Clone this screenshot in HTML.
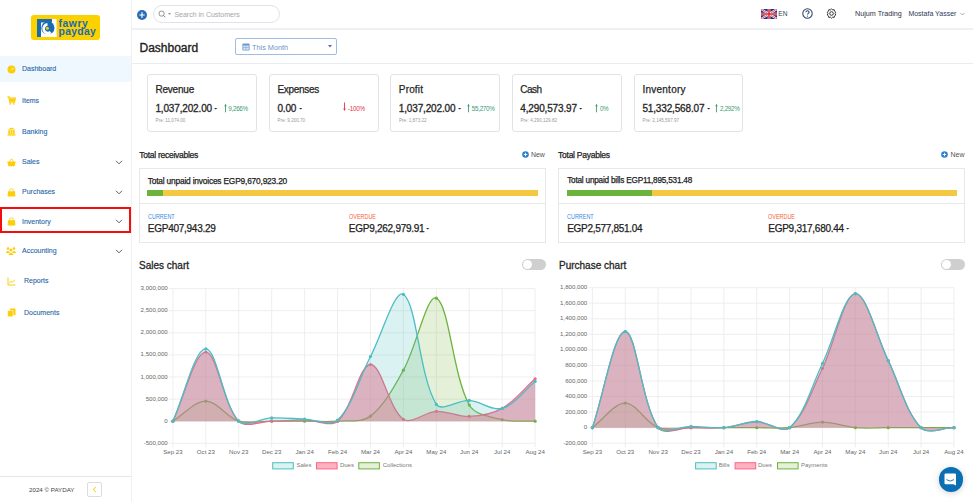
<!DOCTYPE html>
<html><head><meta charset="utf-8">
<style>
*{box-sizing:border-box;margin:0;padding:0}
html,body{width:973px;height:502px;overflow:hidden;background:#fff;font-family:"Liberation Sans",sans-serif;color:#2a2a2a}
.a{position:absolute;white-space:nowrap;line-height:1}
#sb{position:absolute;left:0;top:0;width:132px;height:502px;border-right:1px solid #f0f0f0;background:#fff}
.mi{position:absolute;left:22px;font-size:7px;color:#1f66a6;line-height:1;-webkit-text-stroke:0.1px #1f66a6}
.ic{position:absolute;left:7px;width:9px;height:9px}
.chev{position:absolute;left:115px;width:8px;height:5px}
.card{position:absolute;top:73.5px;width:110px;height:58.5px;border:1px solid #e3e3e3;border-radius:3px;background:#fff}
.ct{position:absolute;left:7.8px;top:10.5px;font-size:10px;letter-spacing:-0.2px;color:#262626;line-height:1;-webkit-text-stroke:0.25px #262626}
.cv{position:absolute;left:7.8px;top:29.5px;font-size:10px;letter-spacing:-0.15px;color:#262626;line-height:1;-webkit-text-stroke:0.3px #262626}
.cp{position:absolute;left:8px;top:44px;font-size:4.6px;color:#9a9a9a;line-height:1}
.pct{position:absolute;top:31.8px;font-size:6.3px;letter-spacing:-0.3px;line-height:1}
.box{position:absolute;top:167.5px;width:407px;height:75.5px;border:1px solid #e8e8e8;background:#fff}
.tl{font-size:8.5px;letter-spacing:-0.26px;color:#222;-webkit-text-stroke:0.25px #222}
svg text{font-family:"Liberation Sans",sans-serif}
.yl{font-size:6.1px;fill:#666;text-anchor:end}
.xl{font-size:6.1px;fill:#666;text-anchor:middle}
</style></head><body>

<!-- SIDEBAR -->
<div id="sb">
  <div class="a" style="left:31px;top:15px;width:69px;height:25px;background:#fcd100;border-radius:3px"></div>
  <svg class="a" style="left:36.5px;top:18.5px" width="20" height="18" viewBox="0 0 20 18">
    <rect x="0" y="0" width="19.5" height="18" fill="#fff"/>
    <circle cx="10.9" cy="8.9" r="6.6" fill="#1b6bb3"/>
    <path d="M0 0H15V3.6H4V18H0Z" fill="#1b6bb3"/>
    <path d="M10.5 5.4A4.3 4.3 0 1 0 13.6 13" fill="none" stroke="#fff" stroke-width="2.7"/>
    <circle cx="10.4" cy="9.3" r="1.5" fill="#f4cd12"/>
    <rect x="5.5" y="14.8" width="14" height="3.2" fill="#fff"/>
  </svg>
  <div class="a" style="left:58.5px;top:19.2px;font-size:10.4px;font-weight:bold;color:#1b6bb3;letter-spacing:0.55px;line-height:9.8px">fawry</div>
  <div class="a" style="left:58.5px;top:26.9px;font-size:10.4px;font-weight:bold;color:#1b6bb3;letter-spacing:0.3px;line-height:9.8px">payday</div>

  <div class="a" style="left:0;top:56px;width:131px;height:26px;background:#eff8fe"></div>

  <!-- icons -->
  <svg class="ic" style="top:64.5px" viewBox="0 0 9 9"><circle cx="4.5" cy="4.5" r="4" fill="#fdcd08"/><path d="M4.5 5L6.3 2.8" stroke="#fff" stroke-width="0.9"/></svg>
  <div class="mi" style="top:65px">Dashboard</div>

  <svg class="ic" style="top:96px" viewBox="0 0 9 9"><path d="M0.5 1H2L2.8 6H7.5L8.3 2.2H2.3" fill="none" stroke="#fdcd08" stroke-width="1.3"/><path d="M2.5 3H8V5H2.8Z" fill="#fdcd08"/><circle cx="3.3" cy="7.8" r="0.9" fill="#fdcd08"/><circle cx="6.8" cy="7.8" r="0.9" fill="#fdcd08"/></svg>
  <div class="mi" style="top:96.5px">Items</div>

  <svg class="ic" style="top:127px" viewBox="0 0 9 9"><path d="M4.5 0.5L8.5 2.6H0.5Z" fill="#fdcd08"/><rect x="1.3" y="3.2" width="6.4" height="3.8" fill="#fdcd08"/><rect x="0.5" y="7.3" width="8" height="1.3" fill="#fdcd08"/><rect x="3" y="3.8" width="0.6" height="3" fill="#fff"/><rect x="5.4" y="3.8" width="0.6" height="3" fill="#fff"/></svg>
  <div class="mi" style="top:127.5px">Banking</div>

  <svg class="ic" style="top:157.5px" viewBox="0 0 9 9"><path d="M0.3 3.5H8.7L7.6 8.3H1.4Z" fill="#fdcd08"/><path d="M2.5 3.5L4.5 0.8L6.5 3.5" fill="none" stroke="#fdcd08" stroke-width="0.9"/></svg>
  <div class="mi" style="top:158px">Sales</div>
  <svg class="chev" style="top:159.5px" viewBox="0 0 8 5"><path d="M1 0.8L4 3.8L7 0.8" fill="none" stroke="#555" stroke-width="0.95"/></svg>

  <svg class="ic" style="top:187.5px" viewBox="0 0 9 9"><path d="M1 3.3H8L8.4 8.6H0.6Z" fill="#fdcd08"/><path d="M2.8 3.5V2.3C2.8 0.3 6.2 0.3 6.2 2.3V3.5" fill="none" stroke="#fdcd08" stroke-width="0.9"/></svg>
  <div class="mi" style="top:188px">Purchases</div>
  <svg class="chev" style="top:189.5px" viewBox="0 0 8 5"><path d="M1 0.8L4 3.8L7 0.8" fill="none" stroke="#555" stroke-width="0.95"/></svg>

  <svg class="ic" style="top:217px" viewBox="0 0 9 9"><path d="M1 3.3H8L8.4 8.6H0.6Z" fill="#fdcd08"/><path d="M2.8 3.5V2.3C2.8 0.3 6.2 0.3 6.2 2.3V3.5" fill="none" stroke="#fdcd08" stroke-width="0.9"/></svg>
  <div class="mi" style="top:217.5px">Inventory</div>
  <svg class="chev" style="top:219px" viewBox="0 0 8 5"><path d="M1 0.8L4 3.8L7 0.8" fill="none" stroke="#555" stroke-width="0.95"/></svg>

  <svg class="ic" style="top:246px;left:6px;width:10px" viewBox="0 0 10 9"><circle cx="2" cy="2.5" r="1.3" fill="#fdcd08"/><circle cx="8" cy="2.5" r="1.3" fill="#fdcd08"/><circle cx="5" cy="4" r="1.5" fill="#fdcd08"/><path d="M0 6.5Q2 3.8 3.5 6.2V7H0Z" fill="#fdcd08"/><path d="M10 6.5Q8 3.8 6.5 6.2V7H10Z" fill="#fdcd08"/><path d="M2.3 9Q5 4.5 7.7 9Z" fill="#fdcd08"/></svg>
  <div class="mi" style="top:246.5px">Accounting</div>
  <svg class="chev" style="top:248.5px" viewBox="0 0 8 5"><path d="M1 0.8L4 3.8L7 0.8" fill="none" stroke="#555" stroke-width="0.95"/></svg>

  <svg class="ic" style="top:276.5px" viewBox="0 0 9 9"><path d="M1 0.5V8H8.5" fill="none" stroke="#fdcd08" stroke-width="1"/><path d="M2.3 6.2L4 4.2L5.3 5.3L7.8 2.8" fill="none" stroke="#fdcd08" stroke-width="1"/></svg>
  <div class="mi" style="top:277px;left:24px">Reports</div>

  <svg class="ic" style="top:308px" viewBox="0 0 9 9"><rect x="3" y="0.5" width="5.5" height="6.5" rx="0.6" fill="#fdcd08"/><rect x="0.6" y="2.5" width="5.5" height="6.3" rx="0.6" fill="#fdcd08" stroke="#fff" stroke-width="0.6"/></svg>
  <div class="mi" style="top:308.5px;left:24px">Documents</div>

  <div class="a" style="left:0;top:207px;width:131px;height:26px;border:2px solid #f40d0d"></div>

  <div class="a" style="left:0;top:476px;width:131px;height:1px;background:#e4e6ea"></div>
  <div class="a" style="left:29px;top:487px;font-size:6.2px;color:#444">2024 © PAYDAY</div>
  <div class="a" style="left:87px;top:482px;width:15px;height:15px;border:1px solid #dcdcdc;border-radius:2px"></div>
  <svg class="a" style="left:91px;top:486px" width="7" height="7" viewBox="0 0 7 7"><path d="M4.8 1L2.2 3.5L4.8 6" fill="none" stroke="#f5c400" stroke-width="1"/></svg>
</div>

<!-- HEADER -->
<div class="a" style="left:132px;top:28px;width:841px;height:2px;background:#eef0f4"></div>
<svg class="a" style="left:137px;top:9.5px" width="10" height="10" viewBox="0 0 10 10"><circle cx="5" cy="5" r="5" fill="#2a6db5"/><path d="M5 2.3V7.7M2.3 5H7.7" stroke="#fff" stroke-width="1.2"/></svg>
<div class="a" style="left:153px;top:5px;width:127px;height:18px;border:1px solid #dfe3e8;border-radius:9px"></div>
<svg class="a" style="left:157.5px;top:10px" width="14" height="9" viewBox="0 0 14 9"><circle cx="3.6" cy="3.6" r="2.6" fill="none" stroke="#777" stroke-width="0.8"/><path d="M5.5 5.5L7.2 7.3" stroke="#777" stroke-width="0.9"/><path d="M10 3.2H13L11.5 4.8Z" fill="#777"/></svg>
<div class="a" style="left:174.4px;top:10.5px;font-size:7px;color:#a5a5a5">Search in Customers</div>

<svg class="a" style="left:761px;top:8.7px" width="16" height="10" viewBox="0 0 16 10">
  <rect width="16" height="10" fill="#1f2a8a"/>
  <path d="M0 0L16 10M16 0L0 10" stroke="#fff" stroke-width="2"/>
  <path d="M0 0L16 10M16 0L0 10" stroke="#d22" stroke-width="0.8"/>
  <path d="M8 0V10M0 5H16" stroke="#fff" stroke-width="2.6"/>
  <path d="M8 0V10M0 5H16" stroke="#e0202a" stroke-width="1.5"/>
</svg>
<div class="a" style="left:778.3px;top:10.8px;font-size:6.6px;color:#2f3f55">EN</div>
<svg class="a" style="left:801.5px;top:8px" width="11" height="11" viewBox="0 0 11 11"><circle cx="5.5" cy="5.5" r="4.7" fill="none" stroke="#2d4668" stroke-width="1.05"/><path d="M3.9 4.2C3.9 2.2 7.1 2.2 7.1 4.2C7.1 5.3 5.5 5.4 5.5 6.6" fill="none" stroke="#2d4668" stroke-width="1.05"/><circle cx="5.5" cy="8.1" r="0.6" fill="#2d4668"/></svg>
<svg class="a" style="left:825.5px;top:8px" width="11" height="11" viewBox="0 0 11 11"><path d="M5.5 0.8L6.6 1.9L8.2 1.7L8.5 3.2L9.8 4.2L9.1 5.6L9.8 7L8.5 7.9L8.2 9.4L6.6 9.2L5.5 10.2L4.4 9.2L2.8 9.4L2.5 7.9L1.2 7L1.9 5.6L1.2 4.2L2.5 3.2L2.8 1.7L4.4 1.9Z" fill="none" stroke="#333" stroke-width="1"/><circle cx="5.5" cy="5.5" r="1.8" fill="none" stroke="#333" stroke-width="1"/></svg>
<div class="a" style="left:855px;top:9.9px;font-size:7.2px;color:#2f3140">Nujum Trading</div>
<div class="a" style="left:908.4px;top:9.9px;font-size:7px;color:#2c3b5a">Mostafa Yasser</div>
<svg class="a" style="left:960px;top:11.5px" width="5" height="4" viewBox="0 0 5 4"><path d="M0.5 1L2.5 3L4.5 1" fill="none" stroke="#888" stroke-width="0.7"/></svg>

<!-- TITLE BAR -->
<div class="a" style="left:132px;top:62.8px;width:841px;height:1.4px;background:#e9ecf0"></div>
<div class="a" style="left:139.5px;top:41.6px;font-size:12px;color:#222;-webkit-text-stroke:0.35px #222">Dashboard</div>
<div class="a" style="left:234.8px;top:38.2px;width:102.2px;height:16.5px;border:1px solid #9fbde3;border-radius:2px"></div>
<svg class="a" style="left:242px;top:42.5px" width="8" height="8" viewBox="0 0 8 8"><rect x="0.4" y="0.6" width="7.2" height="7" rx="0.8" fill="#6e9ad2"/><rect x="1.3" y="2.6" width="5.4" height="4.1" fill="#dfeaf7"/><path d="M1.3 4.6H6.7M4 2.6V6.7" stroke="#6e9ad2" stroke-width="0.6"/></svg>
<div class="a" style="left:252px;top:43.7px;font-size:7.3px;color:#6d95c8">This Month</div>
<svg class="a" style="left:327.5px;top:44.5px" width="4" height="3" viewBox="0 0 4 3"><path d="M0 0H4L2 2.5Z" fill="#4a6fa5"/></svg>

<!-- CARDS -->
<div class="card" style="left:146.6px">
  <div class="ct" style="letter-spacing:-0.2px">Revenue</div>
  <div class="cv">1,037,202.00<svg style="margin-left:2.4px;vertical-align:2.2px" width="4" height="2" viewBox="0 0 4 2"><path d="M0 0H3.4L1.7 1.6Z" fill="#333"/></svg></div>
  <svg class="a" style="left:75.0px;top:28px" width="5" height="10" viewBox="0 0 5 10"><path d="M2.5 1.5V9.3" stroke="#3c9a78" stroke-width="0.9"/><path d="M1.2 3.2L2.5 1L3.8 3.2Z" fill="#3c9a78"/></svg>
  <div class="pct" style="left:80.7px;color:#3c9a78">9,266%</div>
  <div class="cp">Pre: 11,074.00</div>
</div>
<div class="card" style="left:268.6px">
  <div class="ct" style="letter-spacing:-0.31px">Expenses</div>
  <div class="cv">0.00<svg style="margin-left:2.4px;vertical-align:2.2px" width="4" height="2" viewBox="0 0 4 2"><path d="M0 0H3.4L1.7 1.6Z" fill="#333"/></svg></div>
  <svg class="a" style="left:72.7px;top:27.5px" width="5" height="10" viewBox="0 0 5 10"><path d="M2.5 0.5V8" stroke="#e5304d" stroke-width="0.9"/><path d="M1.2 6.5L2.5 9L3.8 6.5Z" fill="#e5304d"/></svg>
  <div class="pct" style="left:78.4px;color:#e5304d">-100%</div>
  <div class="cp">Pre: 9,200.70</div>
</div>
<div class="card" style="left:390px">
  <div class="ct" style="letter-spacing:0.17px">Profit</div>
  <div class="cv">1,037,202.00<svg style="margin-left:2.4px;vertical-align:2.2px" width="4" height="2" viewBox="0 0 4 2"><path d="M0 0H3.4L1.7 1.6Z" fill="#333"/></svg></div>
  <svg class="a" style="left:75.1px;top:28px" width="5" height="10" viewBox="0 0 5 10"><path d="M2.5 1.5V9.3" stroke="#3c9a78" stroke-width="0.9"/><path d="M1.2 3.2L2.5 1L3.8 3.2Z" fill="#3c9a78"/></svg>
  <div class="pct" style="left:80.8px;color:#3c9a78">55,270%</div>
  <div class="cp">Pre: 1,873.22</div>
</div>
<div class="card" style="left:511.5px">
  <div class="ct" style="letter-spacing:-0.5px">Cash</div>
  <div class="cv">4,290,573.97<svg style="margin-left:2.4px;vertical-align:2.2px" width="4" height="2" viewBox="0 0 4 2"><path d="M0 0H3.4L1.7 1.6Z" fill="#333"/></svg></div>
  <svg class="a" style="left:81.7px;top:28px" width="5" height="10" viewBox="0 0 5 10"><path d="M2.5 1.5V9.3" stroke="#3c9a78" stroke-width="0.9"/><path d="M1.2 3.2L2.5 1L3.8 3.2Z" fill="#3c9a78"/></svg>
  <div class="pct" style="left:87.4px;color:#3c9a78">0%</div>
  <div class="cp">Pre: 4,290,129.82</div>
</div>
<div class="card" style="left:633.6px;width:109.8px">
  <div class="ct" style="letter-spacing:0.25px">Inventory</div>
  <div class="cv">51,332,568.07<svg style="margin-left:2.4px;vertical-align:2.2px" width="4" height="2" viewBox="0 0 4 2"><path d="M0 0H3.4L1.7 1.6Z" fill="#333"/></svg></div>
  <svg class="a" style="left:79.7px;top:28px" width="5" height="10" viewBox="0 0 5 10"><path d="M2.5 1.5V9.3" stroke="#3c9a78" stroke-width="0.9"/><path d="M1.2 3.2L2.5 1L3.8 3.2Z" fill="#3c9a78"/></svg>
  <div class="pct" style="left:85.4px;color:#3c9a78">2,292%</div>
  <div class="cp">Pre: 2,145,597.97</div>
</div>

<!-- RECEIVABLES -->
<div class="a tl" style="left:139.2px;top:151px">Total receivables</div>
<svg class="a" style="left:521.8px;top:151px" width="7" height="7" viewBox="0 0 7 7"><circle cx="3.5" cy="3.5" r="3.3" fill="#2a7fd0"/><path d="M3.5 1.8V5.2M1.8 3.5H5.2" stroke="#fff" stroke-width="0.9"/></svg>
<div class="a" style="left:530.9px;top:151px;font-size:7px;color:#555">New</div>
<div class="box" style="left:138.8px">
  <div class="a" style="left:8px;top:8.7px;font-size:8.4px;letter-spacing:-0.2px;color:#222;-webkit-text-stroke:0.25px #222">Total unpaid invoices EGP9,670,923.20</div>
  <div class="a" style="left:7.7px;top:21.2px;width:391px;height:6px;background:#f5c842"></div>
  <div class="a" style="left:7.7px;top:21.2px;width:15.4px;height:6px;background:#6ab33c"></div>
  <div class="a" style="left:0;top:34.6px;width:405px;height:1px;background:#e8e8e8"></div>
  <div class="a" style="left:8px;top:45.1px;font-size:6.5px;color:#3a8ae0;transform:scaleX(0.84);transform-origin:0 0">CURRENT</div>
  <div class="a" style="left:8px;top:55.5px;font-size:10px;letter-spacing:-0.26px;color:#222;-webkit-text-stroke:0.25px #222">EGP407,943.29</div>
  <div class="a" style="left:209px;top:45.1px;font-size:6.5px;color:#f5603a;transform:scaleX(0.84);transform-origin:0 0">OVERDUE</div>
  <div class="a" style="left:209px;top:55.5px;font-size:10px;letter-spacing:-0.26px;color:#222;-webkit-text-stroke:0.25px #222">EGP9,262,979.91</div>
  <svg class="a" style="left:285.8px;top:59px" width="4" height="2" viewBox="0 0 4 2"><path d="M0 0H3.4L1.7 1.6Z" fill="#333"/></svg>
</div>

<!-- PAYABLES -->
<div class="a tl" style="left:558.1px;top:151px">Total Payables</div>
<svg class="a" style="left:941px;top:151px" width="7" height="7" viewBox="0 0 7 7"><circle cx="3.5" cy="3.5" r="3.3" fill="#2a7fd0"/><path d="M3.5 1.8V5.2M1.8 3.5H5.2" stroke="#fff" stroke-width="0.9"/></svg>
<div class="a" style="left:950.5px;top:151px;font-size:7px;color:#555">New</div>
<div class="box" style="left:558.1px;width:406.9px">
  <div class="a" style="left:8.1px;top:8.7px;font-size:8.2px;letter-spacing:-0.2px;color:#222;-webkit-text-stroke:0.25px #222">Total unpaid bills EGP11,895,531.48</div>
  <div class="a" style="left:8.2px;top:21.2px;width:389.6px;height:6px;background:#f5c842"></div>
  <div class="a" style="left:8.2px;top:21.2px;width:85.2px;height:6px;background:#6ab33c"></div>
  <div class="a" style="left:0;top:34.6px;width:405px;height:1px;background:#e8e8e8"></div>
  <div class="a" style="left:8.1px;top:45.1px;font-size:6.5px;color:#3a8ae0;transform:scaleX(0.84);transform-origin:0 0">CURRENT</div>
  <div class="a" style="left:8.1px;top:55.5px;font-size:10px;letter-spacing:-0.3px;color:#222;-webkit-text-stroke:0.25px #222">EGP2,577,851.04</div>
  <div class="a" style="left:209.2px;top:45.1px;font-size:6.5px;color:#f5603a;transform:scaleX(0.84);transform-origin:0 0">OVERDUE</div>
  <div class="a" style="left:209.2px;top:55.5px;font-size:10px;letter-spacing:-0.26px;color:#222;-webkit-text-stroke:0.25px #222">EGP9,317,680.44</div>
  <svg class="a" style="left:286.6px;top:59px" width="4" height="2" viewBox="0 0 4 2"><path d="M0 0H3.4L1.7 1.6Z" fill="#333"/></svg>
</div>

<!-- CHART TITLES -->
<div class="a" style="left:139px;top:261px;font-size:10px;color:#262626;-webkit-text-stroke:0.3px #262626">Sales chart</div>
<div class="a" style="left:522px;top:259px;width:24px;height:11px;border-radius:6px;background:#cfcfcf"></div>
<div class="a" style="left:522.8px;top:259.8px;width:9.4px;height:9.4px;border-radius:50%;background:#fff"></div>
<div class="a" style="left:559px;top:261px;font-size:10px;color:#262626;-webkit-text-stroke:0.3px #262626">Purchase chart</div>
<div class="a" style="left:941px;top:259px;width:24px;height:11px;border-radius:6px;background:#cfcfcf"></div>
<div class="a" style="left:941.8px;top:259.8px;width:9.4px;height:9.4px;border-radius:50%;background:#fff"></div>

<!-- CHARTS -->
<svg class="a" style="left:0;top:0" width="973" height="502" viewBox="0 0 973 502">
<g stroke="#ebebeb" stroke-width="0.85"><line x1="168.9" y1="288.60" x2="535.1" y2="288.60"/><line x1="168.9" y1="310.70" x2="535.1" y2="310.70"/><line x1="168.9" y1="332.80" x2="535.1" y2="332.80"/><line x1="168.9" y1="354.90" x2="535.1" y2="354.90"/><line x1="168.9" y1="377.00" x2="535.1" y2="377.00"/><line x1="168.9" y1="399.10" x2="535.1" y2="399.10"/><line x1="168.9" y1="421.20" x2="535.1" y2="421.20"/><line x1="168.9" y1="443.30" x2="535.1" y2="443.30"/><line x1="172.90" y1="288.6" x2="172.90" y2="447.3"/><line x1="205.83" y1="288.6" x2="205.83" y2="447.3"/><line x1="238.76" y1="288.6" x2="238.76" y2="447.3"/><line x1="271.69" y1="288.6" x2="271.69" y2="447.3"/><line x1="304.62" y1="288.6" x2="304.62" y2="447.3"/><line x1="337.55" y1="288.6" x2="337.55" y2="447.3"/><line x1="370.48" y1="288.6" x2="370.48" y2="447.3"/><line x1="403.41" y1="288.6" x2="403.41" y2="447.3"/><line x1="436.34" y1="288.6" x2="436.34" y2="447.3"/><line x1="469.27" y1="288.6" x2="469.27" y2="447.3"/><line x1="502.20" y1="288.6" x2="502.20" y2="447.3"/><line x1="535.13" y1="288.6" x2="535.13" y2="447.3"/></g><path d="M172.90 421.20 C184.10 414.35 194.63 401.04 205.83 401.04 C217.03 401.04 226.68 417.50 238.76 421.20 C249.07 424.35 260.49 421.20 271.69 421.20 C282.89 421.20 293.42 421.20 304.62 421.20 C315.82 421.20 326.42 422.06 337.55 421.20 C348.81 420.33 362.17 422.55 370.48 416.12 C384.57 405.21 394.08 386.89 403.41 370.19 C416.48 346.80 427.06 293.28 436.34 298.19 C449.45 305.12 452.34 373.79 469.27 405.02 C474.73 415.09 490.51 416.78 502.20 419.65 C512.90 422.28 523.93 420.67 535.13 421.20 L535.13 421.20 L172.90 421.20 Z" fill="rgba(120,185,60,0.2)" stroke="none"/><path d="M172.90 421.20 C184.10 414.35 194.63 401.04 205.83 401.04 C217.03 401.04 226.68 417.50 238.76 421.20 C249.07 424.35 260.49 421.20 271.69 421.20 C282.89 421.20 293.42 421.20 304.62 421.20 C315.82 421.20 326.42 422.06 337.55 421.20 C348.81 420.33 362.17 422.55 370.48 416.12 C384.57 405.21 394.08 386.89 403.41 370.19 C416.48 346.80 427.06 293.28 436.34 298.19 C449.45 305.12 452.34 373.79 469.27 405.02 C474.73 415.09 490.51 416.78 502.20 419.65 C512.90 422.28 523.93 420.67 535.13 421.20" fill="none" stroke="#6db33f" stroke-width="1.3"/><circle cx="172.90" cy="421.20" r="1.6" fill="#6db33f"/><circle cx="205.83" cy="401.04" r="1.6" fill="#6db33f"/><circle cx="238.76" cy="421.20" r="1.6" fill="#6db33f"/><circle cx="271.69" cy="421.20" r="1.6" fill="#6db33f"/><circle cx="304.62" cy="421.20" r="1.6" fill="#6db33f"/><circle cx="337.55" cy="421.20" r="1.6" fill="#6db33f"/><circle cx="370.48" cy="416.12" r="1.6" fill="#6db33f"/><circle cx="403.41" cy="370.19" r="1.6" fill="#6db33f"/><circle cx="436.34" cy="298.19" r="1.6" fill="#6db33f"/><circle cx="469.27" cy="405.02" r="1.6" fill="#6db33f"/><circle cx="502.20" cy="419.65" r="1.6" fill="#6db33f"/><circle cx="535.13" cy="421.20" r="1.6" fill="#6db33f"/><path d="M172.90 421.20 C184.10 397.71 194.63 352.12 205.83 352.12 C217.03 352.12 223.10 404.78 238.76 421.20 C245.50 428.27 260.50 421.43 271.69 421.20 C282.89 420.97 293.42 419.87 304.62 419.87 C315.82 419.87 330.06 427.50 337.55 421.20 C352.45 408.67 359.14 364.82 370.48 364.49 C381.53 364.17 388.77 408.90 403.41 419.30 C411.17 424.81 425.05 411.79 436.34 411.30 C447.44 410.81 458.17 416.92 469.27 416.43 C480.56 415.93 492.49 413.93 502.20 408.38 C514.88 401.13 523.93 388.84 535.13 378.77 L535.13 421.20 L172.90 421.20 Z" fill="rgba(255,99,132,0.5)" stroke="none"/><path d="M172.90 421.20 C184.10 397.71 194.63 352.12 205.83 352.12 C217.03 352.12 223.10 404.78 238.76 421.20 C245.50 428.27 260.50 421.43 271.69 421.20 C282.89 420.97 293.42 419.87 304.62 419.87 C315.82 419.87 330.06 427.50 337.55 421.20 C352.45 408.67 359.14 364.82 370.48 364.49 C381.53 364.17 388.77 408.90 403.41 419.30 C411.17 424.81 425.05 411.79 436.34 411.30 C447.44 410.81 458.17 416.92 469.27 416.43 C480.56 415.93 492.49 413.93 502.20 408.38 C514.88 401.13 523.93 388.84 535.13 378.77" fill="none" stroke="#ec6a89" stroke-width="1.3"/><circle cx="172.90" cy="421.20" r="1.6" fill="#ec6a89"/><circle cx="205.83" cy="352.12" r="1.6" fill="#ec6a89"/><circle cx="238.76" cy="421.20" r="1.6" fill="#ec6a89"/><circle cx="271.69" cy="421.20" r="1.6" fill="#ec6a89"/><circle cx="304.62" cy="419.87" r="1.6" fill="#ec6a89"/><circle cx="337.55" cy="421.20" r="1.6" fill="#ec6a89"/><circle cx="370.48" cy="364.49" r="1.6" fill="#ec6a89"/><circle cx="403.41" cy="419.30" r="1.6" fill="#ec6a89"/><circle cx="436.34" cy="411.30" r="1.6" fill="#ec6a89"/><circle cx="469.27" cy="416.43" r="1.6" fill="#ec6a89"/><circle cx="502.20" cy="408.38" r="1.6" fill="#ec6a89"/><circle cx="535.13" cy="378.77" r="1.6" fill="#ec6a89"/><path d="M172.90 421.20 C184.10 396.60 194.63 348.84 205.83 348.84 C217.03 348.84 222.95 404.62 238.76 421.20 C245.34 428.10 260.47 418.30 271.69 417.93 C282.86 417.56 293.42 418.67 304.62 419.03 C315.82 419.40 330.49 426.79 337.55 420.09 C352.89 405.53 359.18 378.06 370.48 356.49 C381.58 335.30 394.90 288.60 403.41 294.30 C417.29 304.38 418.96 376.32 436.34 404.32 C441.36 412.40 458.19 399.74 469.27 400.43 C480.59 401.12 492.28 411.25 502.20 408.38 C514.67 404.78 523.93 390.59 535.13 381.42 L535.13 421.20 L172.90 421.20 Z" fill="rgba(75,192,192,0.2)" stroke="none"/><path d="M172.90 421.20 C184.10 396.60 194.63 348.84 205.83 348.84 C217.03 348.84 222.95 404.62 238.76 421.20 C245.34 428.10 260.47 418.30 271.69 417.93 C282.86 417.56 293.42 418.67 304.62 419.03 C315.82 419.40 330.49 426.79 337.55 420.09 C352.89 405.53 359.18 378.06 370.48 356.49 C381.58 335.30 394.90 288.60 403.41 294.30 C417.29 304.38 418.96 376.32 436.34 404.32 C441.36 412.40 458.19 399.74 469.27 400.43 C480.59 401.12 492.28 411.25 502.20 408.38 C514.67 404.78 523.93 390.59 535.13 381.42" fill="none" stroke="#4bbdc4" stroke-width="1.3"/><circle cx="172.90" cy="421.20" r="1.6" fill="#4bbdc4"/><circle cx="205.83" cy="348.84" r="1.6" fill="#4bbdc4"/><circle cx="238.76" cy="421.20" r="1.6" fill="#4bbdc4"/><circle cx="271.69" cy="417.93" r="1.6" fill="#4bbdc4"/><circle cx="304.62" cy="419.03" r="1.6" fill="#4bbdc4"/><circle cx="337.55" cy="420.09" r="1.6" fill="#4bbdc4"/><circle cx="370.48" cy="356.49" r="1.6" fill="#4bbdc4"/><circle cx="403.41" cy="294.30" r="1.6" fill="#4bbdc4"/><circle cx="436.34" cy="404.32" r="1.6" fill="#4bbdc4"/><circle cx="469.27" cy="400.43" r="1.6" fill="#4bbdc4"/><circle cx="502.20" cy="408.38" r="1.6" fill="#4bbdc4"/><circle cx="535.13" cy="381.42" r="1.6" fill="#4bbdc4"/><text class="yl" x="167.7" y="290.10">3,000,000</text><text class="yl" x="167.7" y="312.20">2,500,000</text><text class="yl" x="167.7" y="334.30">2,000,000</text><text class="yl" x="167.7" y="356.40">1,500,000</text><text class="yl" x="167.7" y="378.50">1,000,000</text><text class="yl" x="167.7" y="400.60">500,000</text><text class="yl" x="167.7" y="422.70">0</text><text class="yl" x="167.7" y="444.80">-500,000</text><text class="xl" x="172.90" y="454.0">Sep 23</text><text class="xl" x="205.83" y="454.0">Oct 23</text><text class="xl" x="238.76" y="454.0">Nov 23</text><text class="xl" x="271.69" y="454.0">Dec 23</text><text class="xl" x="304.62" y="454.0">Jan 24</text><text class="xl" x="337.55" y="454.0">Feb 24</text><text class="xl" x="370.48" y="454.0">Mar 24</text><text class="xl" x="403.41" y="454.0">Apr 24</text><text class="xl" x="436.34" y="454.0">May 24</text><text class="xl" x="469.27" y="454.0">Jun 24</text><text class="xl" x="502.20" y="454.0">Jul 24</text><text class="xl" x="535.13" y="454.0">Aug 24</text>
<g stroke="#ebebeb" stroke-width="0.85"><line x1="588.4" y1="287.70" x2="954.0" y2="287.70"/><line x1="588.4" y1="303.26" x2="954.0" y2="303.26"/><line x1="588.4" y1="318.81" x2="954.0" y2="318.81"/><line x1="588.4" y1="334.37" x2="954.0" y2="334.37"/><line x1="588.4" y1="349.92" x2="954.0" y2="349.92"/><line x1="588.4" y1="365.48" x2="954.0" y2="365.48"/><line x1="588.4" y1="381.03" x2="954.0" y2="381.03"/><line x1="588.4" y1="396.59" x2="954.0" y2="396.59"/><line x1="588.4" y1="412.14" x2="954.0" y2="412.14"/><line x1="588.4" y1="427.70" x2="954.0" y2="427.70"/><line x1="588.4" y1="443.26" x2="954.0" y2="443.26"/><line x1="592.40" y1="287.7" x2="592.40" y2="447.3"/><line x1="625.27" y1="287.7" x2="625.27" y2="447.3"/><line x1="658.14" y1="287.7" x2="658.14" y2="447.3"/><line x1="691.01" y1="287.7" x2="691.01" y2="447.3"/><line x1="723.88" y1="287.7" x2="723.88" y2="447.3"/><line x1="756.75" y1="287.7" x2="756.75" y2="447.3"/><line x1="789.62" y1="287.7" x2="789.62" y2="447.3"/><line x1="822.49" y1="287.7" x2="822.49" y2="447.3"/><line x1="855.36" y1="287.7" x2="855.36" y2="447.3"/><line x1="888.23" y1="287.7" x2="888.23" y2="447.3"/><line x1="921.10" y1="287.7" x2="921.10" y2="447.3"/><line x1="953.97" y1="287.7" x2="953.97" y2="447.3"/></g><path d="M592.40 427.70 C603.58 419.34 614.09 403.12 625.27 403.12 C636.45 403.12 645.73 423.06 658.14 427.70 C668.08 431.42 679.83 427.70 691.01 427.70 C702.19 427.70 712.70 427.70 723.88 427.70 C735.06 427.70 745.57 427.70 756.75 427.70 C767.93 427.70 778.52 428.65 789.62 427.70 C800.88 426.74 811.31 422.10 822.49 422.10 C833.67 422.10 844.10 426.74 855.36 427.70 C866.46 428.65 877.05 427.70 888.23 427.70 C899.41 427.70 909.92 427.70 921.10 427.70 C932.28 427.70 942.79 427.70 953.97 427.70 L953.97 427.70 L592.40 427.70 Z" fill="rgba(120,185,60,0.2)" stroke="none"/><path d="M592.40 427.70 C603.58 419.34 614.09 403.12 625.27 403.12 C636.45 403.12 645.73 423.06 658.14 427.70 C668.08 431.42 679.83 427.70 691.01 427.70 C702.19 427.70 712.70 427.70 723.88 427.70 C735.06 427.70 745.57 427.70 756.75 427.70 C767.93 427.70 778.52 428.65 789.62 427.70 C800.88 426.74 811.31 422.10 822.49 422.10 C833.67 422.10 844.10 426.74 855.36 427.70 C866.46 428.65 877.05 427.70 888.23 427.70 C899.41 427.70 909.92 427.70 921.10 427.70 C932.28 427.70 942.79 427.70 953.97 427.70" fill="none" stroke="#6db33f" stroke-width="1.3"/><circle cx="592.40" cy="427.70" r="1.6" fill="#6db33f"/><circle cx="625.27" cy="403.12" r="1.6" fill="#6db33f"/><circle cx="658.14" cy="427.70" r="1.6" fill="#6db33f"/><circle cx="691.01" cy="427.70" r="1.6" fill="#6db33f"/><circle cx="723.88" cy="427.70" r="1.6" fill="#6db33f"/><circle cx="756.75" cy="427.70" r="1.6" fill="#6db33f"/><circle cx="789.62" cy="427.70" r="1.6" fill="#6db33f"/><circle cx="822.49" cy="422.10" r="1.6" fill="#6db33f"/><circle cx="855.36" cy="427.70" r="1.6" fill="#6db33f"/><circle cx="888.23" cy="427.70" r="1.6" fill="#6db33f"/><circle cx="921.10" cy="427.70" r="1.6" fill="#6db33f"/><circle cx="953.97" cy="427.70" r="1.6" fill="#6db33f"/><path d="M592.40 427.70 C603.58 394.99 614.09 331.49 625.27 331.49 C636.45 331.49 641.25 402.98 658.14 427.70 C663.60 435.69 679.83 427.70 691.01 427.70 C702.19 427.70 712.79 428.68 723.88 427.70 C735.14 426.70 745.57 421.87 756.75 421.87 C767.93 421.87 782.25 433.71 789.62 427.70 C804.60 415.48 812.33 388.99 822.49 368.28 C834.68 343.42 843.69 295.04 855.36 293.69 C866.04 292.45 877.06 337.88 888.23 360.66 C899.41 383.45 905.58 411.87 921.10 427.70 C927.93 434.67 942.79 427.70 953.97 427.70 L953.97 427.70 L592.40 427.70 Z" fill="rgba(255,99,132,0.5)" stroke="none"/><path d="M592.40 427.70 C603.58 394.99 614.09 331.49 625.27 331.49 C636.45 331.49 641.25 402.98 658.14 427.70 C663.60 435.69 679.83 427.70 691.01 427.70 C702.19 427.70 712.79 428.68 723.88 427.70 C735.14 426.70 745.57 421.87 756.75 421.87 C767.93 421.87 782.25 433.71 789.62 427.70 C804.60 415.48 812.33 388.99 822.49 368.28 C834.68 343.42 843.69 295.04 855.36 293.69 C866.04 292.45 877.06 337.88 888.23 360.66 C899.41 383.45 905.58 411.87 921.10 427.70 C927.93 434.67 942.79 427.70 953.97 427.70" fill="none" stroke="#ec6a89" stroke-width="1.3"/><circle cx="592.40" cy="427.70" r="1.6" fill="#ec6a89"/><circle cx="625.27" cy="331.49" r="1.6" fill="#ec6a89"/><circle cx="658.14" cy="427.70" r="1.6" fill="#ec6a89"/><circle cx="691.01" cy="427.70" r="1.6" fill="#ec6a89"/><circle cx="723.88" cy="427.70" r="1.6" fill="#ec6a89"/><circle cx="756.75" cy="421.87" r="1.6" fill="#ec6a89"/><circle cx="789.62" cy="427.70" r="1.6" fill="#ec6a89"/><circle cx="822.49" cy="368.28" r="1.6" fill="#ec6a89"/><circle cx="855.36" cy="293.69" r="1.6" fill="#ec6a89"/><circle cx="888.23" cy="360.66" r="1.6" fill="#ec6a89"/><circle cx="921.10" cy="427.70" r="1.6" fill="#ec6a89"/><circle cx="953.97" cy="427.70" r="1.6" fill="#ec6a89"/><path d="M592.40 427.70 C603.58 394.99 614.09 331.49 625.27 331.49 C636.45 331.49 641.25 403.30 658.14 427.70 C663.60 435.59 679.83 426.46 691.01 426.46 C702.19 426.46 712.80 428.54 723.88 427.70 C735.15 426.85 745.57 421.48 756.75 421.48 C767.93 421.48 782.54 433.95 789.62 427.70 C804.89 414.22 811.69 385.48 822.49 363.46 C834.04 339.92 844.00 294.17 855.36 293.69 C866.35 293.22 877.06 337.88 888.23 360.66 C899.41 383.45 905.58 411.87 921.10 427.70 C927.93 434.67 942.79 427.70 953.97 427.70 L953.97 427.70 L592.40 427.70 Z" fill="rgba(75,192,192,0.2)" stroke="none"/><path d="M592.40 427.70 C603.58 394.99 614.09 331.49 625.27 331.49 C636.45 331.49 641.25 403.30 658.14 427.70 C663.60 435.59 679.83 426.46 691.01 426.46 C702.19 426.46 712.80 428.54 723.88 427.70 C735.15 426.85 745.57 421.48 756.75 421.48 C767.93 421.48 782.54 433.95 789.62 427.70 C804.89 414.22 811.69 385.48 822.49 363.46 C834.04 339.92 844.00 294.17 855.36 293.69 C866.35 293.22 877.06 337.88 888.23 360.66 C899.41 383.45 905.58 411.87 921.10 427.70 C927.93 434.67 942.79 427.70 953.97 427.70" fill="none" stroke="#4bbdc4" stroke-width="1.3"/><circle cx="592.40" cy="427.70" r="1.6" fill="#4bbdc4"/><circle cx="625.27" cy="331.49" r="1.6" fill="#4bbdc4"/><circle cx="658.14" cy="427.70" r="1.6" fill="#4bbdc4"/><circle cx="691.01" cy="426.46" r="1.6" fill="#4bbdc4"/><circle cx="723.88" cy="427.70" r="1.6" fill="#4bbdc4"/><circle cx="756.75" cy="421.48" r="1.6" fill="#4bbdc4"/><circle cx="789.62" cy="427.70" r="1.6" fill="#4bbdc4"/><circle cx="822.49" cy="363.46" r="1.6" fill="#4bbdc4"/><circle cx="855.36" cy="293.69" r="1.6" fill="#4bbdc4"/><circle cx="888.23" cy="360.66" r="1.6" fill="#4bbdc4"/><circle cx="921.10" cy="427.70" r="1.6" fill="#4bbdc4"/><circle cx="953.97" cy="427.70" r="1.6" fill="#4bbdc4"/><text class="yl" x="587.2" y="289.20">1,800,000</text><text class="yl" x="587.2" y="304.76">1,600,000</text><text class="yl" x="587.2" y="320.31">1,400,000</text><text class="yl" x="587.2" y="335.87">1,200,000</text><text class="yl" x="587.2" y="351.42">1,000,000</text><text class="yl" x="587.2" y="366.98">800,000</text><text class="yl" x="587.2" y="382.53">600,000</text><text class="yl" x="587.2" y="398.09">400,000</text><text class="yl" x="587.2" y="413.64">200,000</text><text class="yl" x="587.2" y="429.20">0</text><text class="yl" x="587.2" y="444.76">-200,000</text><text class="xl" x="592.40" y="454.0">Sep 23</text><text class="xl" x="625.27" y="454.0">Oct 23</text><text class="xl" x="658.14" y="454.0">Nov 23</text><text class="xl" x="691.01" y="454.0">Dec 23</text><text class="xl" x="723.88" y="454.0">Jan 24</text><text class="xl" x="756.75" y="454.0">Feb 24</text><text class="xl" x="789.62" y="454.0">Mar 24</text><text class="xl" x="822.49" y="454.0">Apr 24</text><text class="xl" x="855.36" y="454.0">May 24</text><text class="xl" x="888.23" y="454.0">Jun 24</text><text class="xl" x="921.10" y="454.0">Jul 24</text><text class="xl" x="953.97" y="454.0">Aug 24</text>
<g stroke-width="1">
<rect x="272.7" y="462.7" width="20.6" height="6.2" fill="rgba(75,192,192,0.2)" stroke="#4bc0c0"/>
<rect x="316.5" y="462.7" width="20.6" height="6.2" fill="rgba(255,99,132,0.5)" stroke="#ff6384"/>
<rect x="358.8" y="462.7" width="20.6" height="6.2" fill="rgba(120,185,60,0.2)" stroke="#6db33f"/>
<rect x="695.6" y="462.7" width="20.6" height="6.2" fill="rgba(75,192,192,0.2)" stroke="#4bc0c0"/>
<rect x="735.1" y="462.7" width="20.6" height="6.2" fill="rgba(255,99,132,0.5)" stroke="#ff6384"/>
<rect x="777.5" y="462.7" width="20.6" height="6.2" fill="rgba(120,185,60,0.2)" stroke="#6db33f"/>
</g>
<g font-size="6" fill="#7a7a7a">
<text x="296.4" y="467.1">Sales</text><text x="339.9" y="467.1">Dues</text><text x="382.7" y="467.1">Collections</text>
<text x="718.7" y="467.1">Bills</text><text x="758" y="467.1">Dues</text><text x="800.9" y="467.1">Payments</text>
</g>
</svg>

<!-- CHAT -->
<div class="a" style="left:938.6px;top:467.2px;width:24.4px;height:24.4px;border-radius:50%;background:#0a6fb3;box-shadow:0 1px 6px rgba(0,0,0,0.18)"></div>
<svg class="a" style="left:943.7px;top:473px" width="12.5" height="13" viewBox="0 0 12.5 13"><path d="M1.5 0.5H11A1 1 0 0 1 12 1.5V12.5L9.5 11.2H1.5A1 1 0 0 1 0.5 10.2V1.5A1 1 0 0 1 1.5 0.5Z" fill="#fff"/><path d="M2.4 6.6Q6.2 9.6 10 6.6" fill="none" stroke="#0a6fb3" stroke-width="0.9"/></svg>

</body></html>
